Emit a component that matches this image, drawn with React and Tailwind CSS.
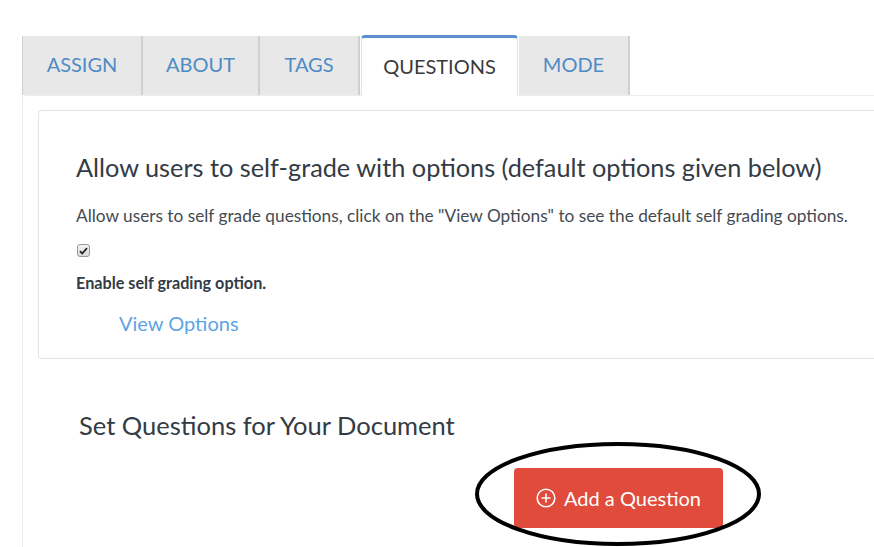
import React from 'react';

// ── Tabs ──────────────────────────────────────────────────────────────────────

const TABS = [
  { label: 'ASSIGN', w: 'w-[121px]' },
  { label: 'ABOUT', w: 'w-[117px]' },
  { label: 'TAGS', w: 'w-[100px]' },
  { label: 'QUESTIONS', w: 'w-[157px]', active: true },
  { label: 'MODE', w: 'w-[111px]' },
];

function Tab({ label, w, active }) {
  if (active) {
    return (
      <div
        className={`${w} h-[61px] -mb-px mx-[1px] flex items-center justify-center bg-white border-t-[3px] border-[#5b8fd0] border-x border-x-[#e2e2e2] rounded-t-[4px] text-[20px] text-[#3a3a3a] pb-[3px] relative z-10`}
      >
        {label}
      </div>
    );
  }
  return (
    <div
      className={`${w} h-[59px] flex items-center justify-center bg-[#e8e8e8] border-r-2 border-[#d0d0d0] first:border-l text-[20px] text-[#4f8bc4] pb-[4px]`}
    >
      {label}
    </div>
  );
}

function CirclePlus() {
  return (
    <svg width="20" height="20" viewBox="0 0 20 20" fill="none" stroke="white" strokeWidth="1.6">
      <circle cx="10" cy="10" r="8.8" />
      <path d="M10 5.5v9M5.5 10h9" />
    </svg>
  );
}

// ── Main ──────────────────────────────────────────────────────────────────────

export default function App() {
  return (
    <div className="w-[874px] h-[547px] bg-white overflow-hidden relative font-['Lato','Open_Sans',sans-serif]">
      <div className="pt-[35px] pl-[22px]">
        {/* ── Tab bar ─────────────────────────────────────────── */}
        <div className="flex items-end">
          {TABS.map((t) => (
            <Tab key={t.label} {...t} />
          ))}
        </div>

        {/* ── Panel ───────────────────────────────────────────── */}
        <div className="h-[460px] border-t border-l border-[#ececec] rounded-tl-[4px] pl-[15px] pt-[14px]">
          <div className="border border-r-0 border-[#e4e4e4] rounded-l-[4px] h-[249px] pl-[37px] pt-[40px]">
            <h2 className="text-[25.3px] leading-[32px] text-[#333b45] whitespace-nowrap">
              Allow users to self-grade with options (default options given below)
            </h2>
            <p className="mt-[21px] text-[17.25px] leading-[24px] text-[#454b52] whitespace-nowrap">
              Allow users to self grade questions, click on the "View Options" to see the default self grading options.
            </p>
            <div className="mt-[16px] ml-[1px] w-[13px] h-[13px] rounded-[3px] border border-[#9a9a9a] bg-gradient-to-b from-[#f4f4f4] to-[#d8d8d8] flex items-center justify-center">
              <svg width="9" height="8" viewBox="0 0 9 8">
                <path d="M1 4.2l2.2 2.3L8 1.2" fill="none" stroke="#222" strokeWidth="1.8" />
              </svg>
            </div>
            <div className="mt-[15px] text-[16.2px] leading-[22px] font-bold text-[#333b45]">Enable self grading option.</div>
            <div className="mt-[15px] ml-[43px] text-[20px] leading-[28px] text-[#5ea4e4]">View Options</div>
          </div>

          <h3 className="mt-[47px] ml-[41px] text-[25.5px] text-[#333b45]">Set Questions for Your Document</h3>

          <div className="mt-[24px] ml-[476px] w-[209px] h-[60px] rounded-[4px] bg-[#e04b3b] flex items-center justify-center gap-[8px] text-white text-[20px]">
            <CirclePlus />
            <span>Add a Question</span>
          </div>
        </div>
      </div>

      {/* ── Hand-drawn annotation ring ───────────────────────── */}
      <svg className="absolute left-[473px] top-[440px]" width="292" height="107" viewBox="0 0 292 107">
        <ellipse cx="145" cy="54" rx="141" ry="50" fill="none" stroke="black" strokeWidth="4" />
      </svg>
    </div>
  );
}
